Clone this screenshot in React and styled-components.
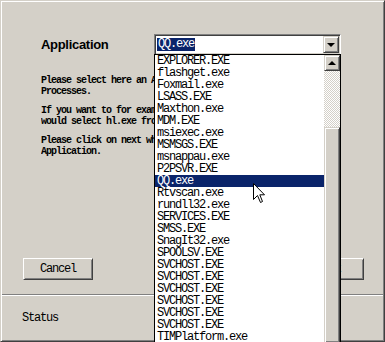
import React from "react";
import styled, { createGlobalStyle } from "styled-components";

const processes = [
  "EXPLORER.EXE",
  "flashget.exe",
  "Foxmail.exe",
  "LSASS.EXE",
  "Maxthon.exe",
  "MDM.EXE",
  "msiexec.exe",
  "MSMSGS.EXE",
  "msnappau.exe",
  "P2PSVR.EXE",
  "QQ.exe",
  "Rtvscan.exe",
  "rundll32.exe",
  "SERVICES.EXE",
  "SMSS.EXE",
  "SnagIt32.exe",
  "SPOOLSV.EXE",
  "SVCHOST.EXE",
  "SVCHOST.EXE",
  "SVCHOST.EXE",
  "SVCHOST.EXE",
  "SVCHOST.EXE",
  "SVCHOST.EXE",
  "TIMPlatform.exe",
];

const selected = "QQ.exe";

const App = () => {
  return (
    <>
      <GlobalStyle />
      <Window>
        <Body>
          <HeaderRow>
            <Label>Application</Label>
            <ComboWrap>
              <Combo>
                <ComboValue>{selected}</ComboValue>
                <ArrowButton>
                  <Triangle $dir="down" />
                </ArrowButton>
              </Combo>
              <DropList>
                <Items>
                  {processes.map((name, i) => (
                    <Item key={i} $active={name === selected}>
                      {name}
                    </Item>
                  ))}
                </Items>
                <ScrollBar>
                  <ArrowButton $square>
                    <Triangle $dir="up" />
                  </ArrowButton>
                  <Track />
                  <Thumb />
                </ScrollBar>
              </DropList>
            </ComboWrap>
          </HeaderRow>
          {/* the open list covers the right part of these lines */}
          <Description>
            <p>
              Please select here an Application<br />
              Processes.
            </p>
            <p>
              If you want to for example<br />
              would select hl.exe from
            </p>
            <p>
              Please click on next when<br />
              Application.
            </p>
          </Description>
        </Body>
        <ButtonRow>
          <Button>Cancel</Button>
          <ButtonGroup>
            <Button>Back</Button>
            <Button>Next</Button>
          </ButtonGroup>
        </ButtonRow>
        <Separator />
        <StatusBar>Status</StatusBar>
        <Cursor width="13" height="21" viewBox="0 0 13 21">
          <path
            d="M0.5 0.5 V16.5 L4.5 12.5 L7.5 19.5 L9.5 18.5 L6.8 11.8 H11.5 Z"
            fill="#fff"
            stroke="#000"
            strokeWidth="1"
          />
        </Cursor>
      </Window>
    </>
  );
};

const GlobalStyle = createGlobalStyle`
  html, body {
    margin: 0;
    padding: 0;
    overflow: hidden;
    background: #d4d0c8;
  }
`;

const Window = styled.div`
  position: relative;
  box-sizing: border-box;
  width: 385px;
  height: 342px;
  display: flex;
  flex-direction: column;
  background: #d4d0c8;
  border: 1px solid;
  border-color: #d4d0c8 #404040 #404040 #d4d0c8;
  box-shadow: inset 1px 1px #fff, inset -1px -1px #808080;
  font-family: "Liberation Mono", "Courier New", monospace;
  color: #000;
`;

const Body = styled.div`
  padding: 33px 0 0 40px;
`;

const HeaderRow = styled.div`
  display: flex;
  align-items: center;
  height: 21px;
`;

const Label = styled.div`
  width: 113px;
  font-family: "Liberation Sans", Arial, sans-serif;
  font-weight: bold;
  font-size: 13px;
  letter-spacing: -0.3px;
`;

const ComboWrap = styled.div`
  position: relative;
  z-index: 2;
`;

const Combo = styled.div`
  box-sizing: border-box;
  width: 187px;
  height: 21px;
  display: flex;
  align-items: center;
  justify-content: space-between;
  background: #fff;
  border: 1px solid;
  border-color: #808080 #fff #fff #808080;
  box-shadow: inset 1px 1px #404040, inset -1px -1px #d4d0c8;
  padding: 1px;
`;

const ComboValue = styled.span`
  margin-left: 1px;
  padding: 0 1px;
  height: 13px;
  line-height: 13px;
  background: #0a246a;
  color: #fff;
  font-size: 12px;
  letter-spacing: -1.2px;
`;

const ArrowButton = styled.div`
  box-sizing: border-box;
  width: 16px;
  height: ${(p) => (p.$square ? "16px" : "17px")};
  flex-shrink: 0;
  display: flex;
  align-items: center;
  justify-content: center;
  background: #d4d0c8;
  border: 1px solid;
  border-color: #d4d0c8 #404040 #404040 #d4d0c8;
  box-shadow: inset 1px 1px #fff, inset -1px -1px #808080;
`;

const Triangle = styled.span`
  width: 0;
  height: 0;
  border-left: 4px solid transparent;
  border-right: 4px solid transparent;
  ${(p) =>
    p.$dir === "up"
      ? "border-bottom: 4px solid #000; margin-top: -1px;"
      : "border-top: 4px solid #000; margin-top: 1px;"}
`;

const DropList = styled.div`
  position: absolute;
  top: 20px;
  left: 0;
  box-sizing: border-box;
  width: 187px;
  height: 290px;
  display: flex;
  background: #fff;
  border: 1px solid #000;
`;

const Items = styled.ul`
  flex: 1;
  margin: 0;
  padding: 0;
  list-style: none;
`;

const Item = styled.li`
  height: 12px;
  line-height: 12px;
  padding-left: 2px;
  font-size: 12px;
  letter-spacing: -1.2px;
  white-space: nowrap;
  background: ${(p) => (p.$active ? "#0a246a" : "transparent")};
  color: ${(p) => (p.$active ? "#fff" : "#000")};
`;

const ScrollBar = styled.div`
  width: 16px;
  display: flex;
  flex-direction: column;
`;

const Track = styled.div`
  height: 56px;
  background: repeating-conic-gradient(#d4d0c8 0 25%, #fff 0 50%) 0 0 / 2px 2px;
`;

const Thumb = styled.div`
  flex: 1;
  background: #d4d0c8;
  border: 1px solid;
  border-color: #d4d0c8 #404040 #404040 #d4d0c8;
  box-shadow: inset 1px 1px #fff, inset -1px -1px #808080;
`;

const Description = styled.div`
  width: 113px;
  overflow: hidden;
  margin-top: 20px;
  font-size: 10px;
  font-weight: bold;
  letter-spacing: -1px;
  line-height: 11px;
  white-space: nowrap;

  p {
    margin: 0 0 8px;
  }
`;

const ButtonRow = styled.div`
  margin-top: auto;
  margin-bottom: 14px;
  padding: 0 20px 0 22px;
  display: flex;
  justify-content: space-between;
`;

const ButtonGroup = styled.div`
  display: flex;
  gap: 2px;
`;

const Button = styled.div`
  box-sizing: border-box;
  width: 70px;
  height: 22px;
  display: flex;
  align-items: center;
  justify-content: center;
  font-size: 12px;
  letter-spacing: -1.2px;
  background: #d4d0c8;
  border: 1px solid;
  border-color: #fff #404040 #404040 #fff;
  box-shadow: inset 1px 1px #d4d0c8, inset -1px -1px #808080;
`;

const Separator = styled.div`
  height: 1px;
  margin: 0 1px;
  background: #808080;
  border-bottom: 1px solid #fff;
`;

const StatusBar = styled.div`
  height: 45px;
  box-sizing: border-box;
  padding: 16px 0 0 21px;
  line-height: 12px;
  font-size: 12px;
  letter-spacing: -1.2px;
`;

const Cursor = styled.svg`
  position: absolute;
  left: 252px;
  top: 182px;
  z-index: 5;
`;

export default App;
